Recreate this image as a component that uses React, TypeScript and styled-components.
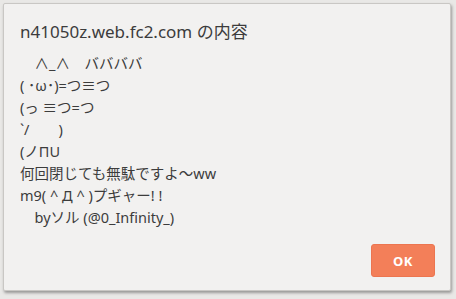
import { createGlobalStyle, styled } from 'styled-components'

const GlobalStyle = createGlobalStyle`
  html, body {
    margin: 0;
    padding: 0;
    background: #e9e8e6;
  }
`

const lines = [
  '　∧_∧　ババババ',
  '( ･ω･)=つ≡つ',
  '(っ ≡つ=つ',
  '`/　　)',
  '(ノΠU',
  '何回閉じても無駄ですよ～ww',
  'm9( ^ Д ^ )プギャー! !',
  '　byソル (@0_Infinity_)',
]

export default function App() {
  return (
    <>
      <GlobalStyle />
      <Screen>
        <Dialog>
          <Title>n41050z.web.fc2.com の内容</Title>
          <Message>
            {lines.map((line, i) => (
              <Line key={i}>{line}</Line>
            ))}
          </Message>
          <Footer>
            <OkButton>OK</OkButton>
          </Footer>
        </Dialog>
      </Screen>
    </>
  )
}

const Screen = styled.div`
  width: 456px;
  height: 299px;
  padding: 3px 0 0 3px;
  box-sizing: border-box;
  background: #e9e8e6;
`

const Dialog = styled.div`
  width: 448px;
  height: 288px;
  box-sizing: border-box;
  background: #f2f1f0;
  border: 1px solid #c9c7c4;
  border-radius: 2px;
  box-shadow: 1px 2px 3px rgba(0, 0, 0, 0.35);
  display: flex;
  flex-direction: column;
  padding: 16px 15px 13px 16px;
  font-family: 'Noto Sans', 'Noto Sans CJK JP', sans-serif;
  color: #3c3c3c;
`

const Title = styled.div`
  font-size: 17px;
  line-height: 24px;
  margin-bottom: 8px;
`

const Message = styled.div`
  display: flex;
  flex-direction: column;
  flex: 1;
`

const Line = styled.div`
  font-size: 14.5px;
  line-height: 22px;
  white-space: pre;
`

const Footer = styled.div`
  display: flex;
  justify-content: flex-end;
`

const OkButton = styled.button`
  width: 64px;
  height: 33px;
  border: 1px solid #ec7550;
  border-radius: 3px;
  background: #f37f59;
  color: #ffffff;
  font-family: 'Noto Sans', sans-serif;
  font-weight: bold;
  font-size: 13px;
  letter-spacing: 0.5px;
`
